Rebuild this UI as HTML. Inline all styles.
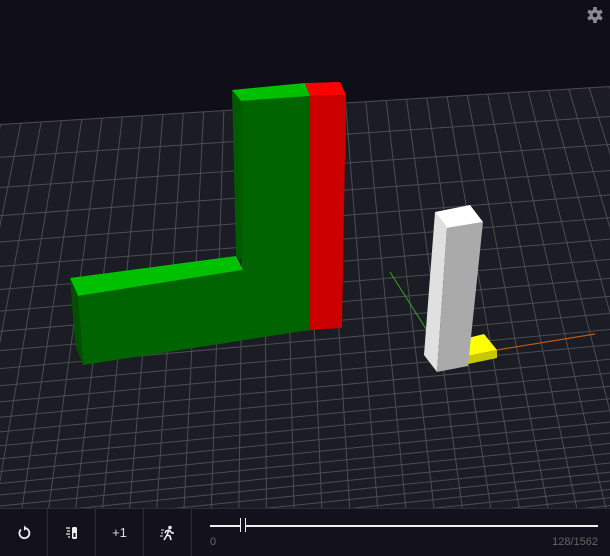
<!DOCTYPE html>
<html><head><meta charset="utf-8"><style>
html,body{margin:0;padding:0;background:#0f0e19;width:610px;height:556px;overflow:hidden;font-family:"Liberation Sans",sans-serif;position:relative}
*{box-sizing:border-box}
#v{position:absolute;left:0;top:0;overflow:hidden;display:block}
#bar{position:absolute;left:0;top:508px;width:610px;height:48px;background:#12111c;border-top:1px solid #2c2b35;overflow:hidden}
.b{position:absolute;top:0;height:47px;width:48px;border-right:1px solid #2c2b35;color:#ddd;font-size:13px;display:flex;align-items:center;justify-content:center}
</style></head><body>
<svg id="v" width="610" height="508" viewBox="0 0 610 508">
<rect width="610" height="508" fill="#0f0e19"/>
<g id="grid"></g>
<polygon points="232,90 241,101 243,262 236,256" fill="#005a00"/>
<polygon points="241,101 310,96 310,330 243,332" fill="#006400"/>
<polygon points="232,90 305,83 310,96 241,101" fill="#00c000"/>
<polygon points="70,278 236,256 243,270 78,296" fill="#00c000"/>
<polygon points="78,296 243,270 243,332 310,330 83,365" fill="#006400"/>
<polygon points="70,278 78,296 83,365 75,345" fill="#005000"/>
<polygon points="305,83 340,82 346,95 310,96" fill="#ff0000"/>
<polygon points="310,96 346,95 342,328 310,330" fill="#cc0000"/>
<line x1="390" y1="272" x2="428" y2="332" stroke="#2fae1a" stroke-width="1"/>
<line x1="497" y1="350" x2="595" y2="334" stroke="#c35a10" stroke-width="1.2"/>
<polygon points="468,338 484,334 497,350 468,356" fill="#ffff00"/>
<polygon points="468,356 497,350 497,358 468,364" fill="#c8c800"/>
<polygon points="435,212 447,228 437,372 424,355" fill="#e0e0e0"/>
<polygon points="447,228 483,222 468,366 437,372" fill="#aaaaaa"/>
<polygon points="435,212 470,205 483,222 447,228" fill="#ffffff"/>
<g transform="translate(595,15)" fill="#8a8a92">
<circle r="5.5"/>
<rect x="-1.8" y="-8" width="3.6" height="16"/>
<rect x="-1.8" y="-8" width="3.6" height="16" transform="rotate(60)"/>
<rect x="-1.8" y="-8" width="3.6" height="16" transform="rotate(120)"/>
<circle r="2.3" fill="#0f0e19"/>
</g>
</svg>
<div id="bar">
<div class="b" style="left:0"><svg width="16" height="16" viewBox="0 0 16 16"><path d="M5 4.5 A5 5 0 1 0 9 3.2" fill="none" stroke="#eee" stroke-width="1.8"/><path d="M8 0.5 L11 3.3 L8 5.8 Z" fill="#eee"/></svg></div>
<div class="b" style="left:48px"><svg width="16" height="16" viewBox="0 0 16 16"><rect x="8" y="2" width="5" height="12" rx="1.5" fill="#eee"/><rect x="9.5" y="8" width="2" height="4" fill="#12111c"/><path d="M2 3h4M3 6h3M2 9h4M4 12h2" stroke="#eee" stroke-width="1.2"/></svg></div>
<div class="b" style="left:96px">+1</div>
<div class="b" style="left:144px"><svg width="16" height="16" viewBox="0 0 16 16"><circle cx="10" cy="2.5" r="1.8" fill="#eee"/><path d="M9 5 L7 10 L4 15 M7 10 L10 11 L11 15 M9 5 L12 8 L14 8 M9 5 L6 6 L5 8" fill="none" stroke="#eee" stroke-width="1.6"/><path d="M1 5h3M1 8h2M0 11h3" stroke="#eee" stroke-width="1"/></svg></div>
<div style="position:absolute;left:210px;top:16px;width:388px;height:2px;background:#eee"></div>
<div style="position:absolute;left:240px;top:9px;width:6px;height:14px;border-left:1px solid #eee;border-right:1px solid #eee;background:#12111c"></div>
<div style="position:absolute;left:210px;top:27px;color:#666;font-size:11px;line-height:13px">0</div>
<div style="position:absolute;right:12px;top:27px;color:#666;font-size:11px;line-height:13px">128/1562</div>
</div>
<script>
(function(){
var g=document.getElementById('grid');
var F0=[-40,127],F1=[650,84],N0=[-170,640],N1=[820,530],wf=1,wn=2.3,n=34;
function P(u,v){var fx=F0[0]+(F1[0]-F0[0])*u,fy=F0[1]+(F1[1]-F0[1])*u,nx=N0[0]+(N1[0]-N0[0])*u,ny=N0[1]+(N1[1]-N0[1])*u;var a=(1-v)*wf,b=v*wn,s=a+b;return[(a*fx+b*nx)/s,(a*fy+b*ny)/s];}
var s='<polygon points="'+P(0,0)+' '+P(1,0)+' '+P(1,1)+' '+P(0,1)+'" fill="#1c1c24"/>';
for(var i=0;i<=n;i++){var t=i/n;var a=P(t,0),b=P(t,1),c=P(0,t),d=P(1,t);
s+='<line x1="'+a[0]+'" y1="'+a[1]+'" x2="'+b[0]+'" y2="'+b[1]+'" stroke="#4c4c54" stroke-width="1"/>';
s+='<line x1="'+c[0]+'" y1="'+c[1]+'" x2="'+d[0]+'" y2="'+d[1]+'" stroke="#4c4c54" stroke-width="1"/>';}
g.innerHTML=s;})();
</script>
</body></html>
